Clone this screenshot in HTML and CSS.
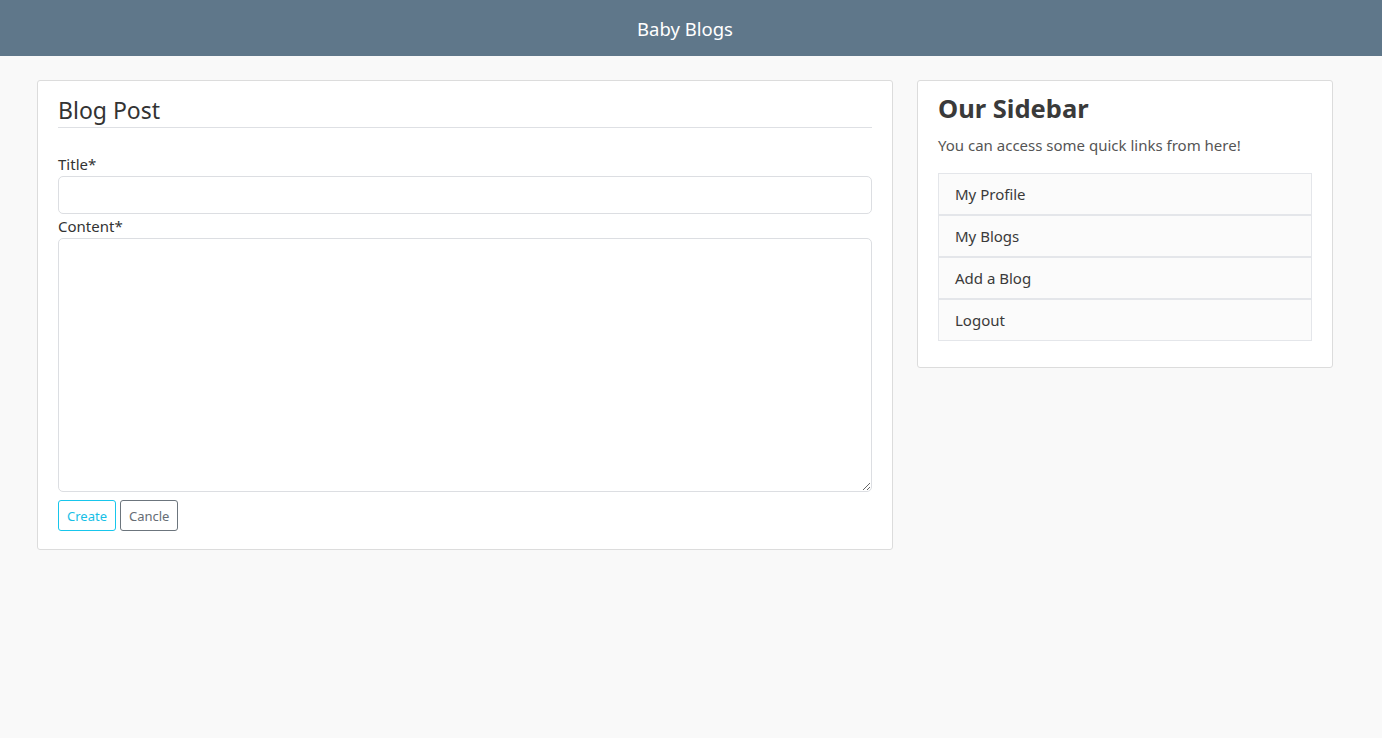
FILE: index.html
```html
<!DOCTYPE html>
<html>
<head>
<meta charset="utf-8">
<link rel="stylesheet" href="styles.css">
</head>
<body>
<header class="topbar">Baby Blogs</header>
<main class="layout">
  <section class="card post-card">
    <h2 class="post-title">Blog Post</h2>
    <form class="post-form">
      <label class="field-label">Title*</label>
      <input class="field-input" type="text">
      <label class="field-label">Content*</label>
      <textarea class="field-area"></textarea>
      <div class="actions">
        <button type="button" class="btn btn-info">Create</button>
        <button type="button" class="btn btn-secondary">Cancle</button>
      </div>
    </form>
  </section>
  <aside class="card side-card">
    <h1 class="side-title">Our Sidebar</h1>
    <p class="side-text">You can access some quick links from here!</p>
    <ul class="link-list">
      <li class="link-item">My Profile</li>
      <li class="link-item">My Blogs</li>
      <li class="link-item">Add a Blog</li>
      <li class="link-item">Logout</li>
    </ul>
  </aside>
</main>
</body>
</html>
```
FILE: styles.css
```css
* { box-sizing: border-box; }
html, body { margin: 0; padding: 0; }
body {
  background: #f9f9f9;
  font-family: "Noto Sans", "Open Sans", "Liberation Sans", sans-serif;
  color: #333;
  font-size: 15px;
}
.topbar {
  height: 56px;
  background: #5f778a;
  color: #fff;
  font-size: 18.5px;
  display: flex;
  align-items: center;
  justify-content: center;
  padding: 0 12px 0 0;
}
.layout {
  display: flex;
  align-items: flex-start;
  gap: 24px;
  padding: 24px 49px 0 37px;
}
.card {
  background: #fff;
  border: 1px solid #dcdcdc;
  border-radius: 3px;
  padding: 0 20px 20px;
}
.post-card { width: 856px; padding-bottom: 18px; }
.side-card { width: 416px; padding-bottom: 26px; }
.post-title {
  margin: 0;
  font-weight: 400;
  font-size: 23px;
  color: #333;
  padding-top: 14px;
  height: 47px;
  line-height: 30px;
  border-bottom: 1px solid #dee0e4;
}
.post-form {
  display: flex;
  flex-direction: column;
  padding-top: 25px;
}
.field-label {
  font-size: 15px;
  line-height: 22px;
  color: #333;
}
.field-input {
  height: 38px;
  border: 1px solid #dcdee2;
  border-radius: 5px;
  margin: 1px 0 1px;
  width: 100%;
}
.field-area {
  height: 254px;
  border: 1px solid #dcdee2;
  border-radius: 5px;
  margin-top: 1px;
  width: 100%;
  resize: vertical;
}
.actions {
  display: flex;
  gap: 4px;
  margin-top: 8px;
}
.btn {
  font-family: inherit;
  font-size: 13px;
  height: 31px;
  padding: 0 8px;
  background: #fff;
  border-radius: 3px;
  border: 1px solid;
}
.btn-info { color: #17c0e6; border-color: #17c6ec; }
.btn-secondary { color: #666d75; border-color: #6c757d; }
.side-title {
  margin: 0;
  padding-top: 9px;
  font-size: 25.5px;
  font-weight: 700;
  line-height: 36px;
  color: #3a3a3a;
}
.side-text {
  margin: 9px 0 0;
  font-size: 15px;
  line-height: 20px;
  color: #555;
}
.link-list {
  list-style: none;
  margin: 19px 0 0;
  padding: 0;
  display: flex;
  flex-direction: column;
}
.link-item {
  height: 42px;
  background: #fbfbfb;
  border: 1px solid #e4e6ea;
  margin-top: -1px;
  padding: 0 16px;
  display: flex;
  align-items: center;
  font-size: 15px;
  color: #3a3a3a;
}
.link-item + .link-item { border-top: 2px solid #e4e6ea; height: 43px; }
```
